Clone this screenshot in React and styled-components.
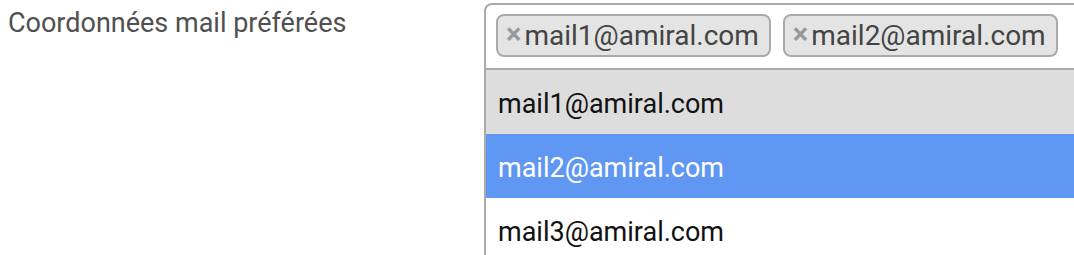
import React from "react";
import styled, { createGlobalStyle } from "styled-components";

const Global = createGlobalStyle`
  html, body { margin: 0; padding: 0; background: #fff; overflow: hidden; }
  body { font-family: Roboto, "Liberation Sans", sans-serif; }
`;

const FormRow = styled.div`
  display: flex;
  align-items: flex-start;
  padding: 3px 0 0 8px;
  width: 1200px;
`;

const Label = styled.label`
  width: 476px;
  flex: none;
  font-size: 27px;
  line-height: 32px;
  color: #505050;
  padding-top: 4px;
`;

const Select = styled.div`
  width: 640px;
  flex: none;
  display: flex;
  flex-direction: column;
`;

const Selection = styled.div`
  display: flex;
  flex-wrap: wrap;
  gap: 12px;
  padding: 9px 10px 11px;
  border: 2px solid #aaa;
  border-bottom-width: 0;
  border-radius: 8px 8px 0 0;
`;

const Tag = styled.span`
  display: inline-flex;
  align-items: center;
  box-sizing: border-box;
  height: 43px;
  padding: 0 10px 0 8px;
  border: 2px solid #aaa;
  border-radius: 8px;
  background: #e4e4e4;
  color: #444;
  font-size: 28px;
`;

const Remove = styled.span`
  color: #999;
  font-weight: 700;
  font-size: 29px;
  line-height: 1;
  margin-right: 3px;
  position: relative;
  top: -1px;
`;

const Dropdown = styled.ul`
  list-style: none;
  margin: 0;
  padding: 0;
  border: 2px solid #aaa;
  border-bottom: 0;
`;

const Option = styled.li`
  box-sizing: border-box;
  height: 64px;
  display: flex;
  align-items: center;
  padding: 4px 12px 0;
  font-size: 27px;
  background: ${(p) => (p.$state === "highlighted" ? "#5f97f2" : p.$state === "selected" ? "#dddddd" : "#fff")};
  color: ${(p) => (p.$state === "highlighted" ? "#fff" : "#111")};
`;

const tags = ["mail1@amiral.com", "mail2@amiral.com"];
const options = [
  { v: "mail1@amiral.com", s: "selected" },
  { v: "mail2@amiral.com", s: "highlighted" },
  { v: "mail3@amiral.com", s: "" },
];

export default function App() {
  return (
    <>
      <Global />
      <FormRow>
        <Label>Coordonnées mail préférées</Label>
        <Select>
          <Selection>
            {tags.map((t) => (
              <Tag key={t}>
                <Remove>×</Remove>
                {t}
              </Tag>
            ))}
          </Selection>
          <Dropdown>
            {options.map((o) => (
              <Option key={o.v} $state={o.s}>
                {o.v}
              </Option>
            ))}
          </Dropdown>
        </Select>
      </FormRow>
    </>
  );
}
